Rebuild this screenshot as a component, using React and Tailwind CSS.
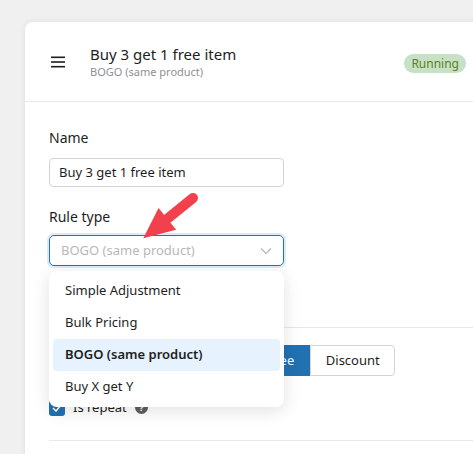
import React from "react";

const font = { fontFamily: '"Noto Sans", "Open Sans", sans-serif' };

function Hamburger() {
  return (
    <svg width="16" height="14" viewBox="0 0 16 14" className="text-[#1e1e1e]">
      <rect x="1" y="1.5" width="14" height="1.6" fill="currentColor" />
      <rect x="1" y="6.2" width="14" height="1.6" fill="currentColor" />
      <rect x="1" y="10.9" width="14" height="1.6" fill="currentColor" />
    </svg>
  );
}

function Chevron() {
  return (
    <svg width="12" height="8" viewBox="0 0 12 8" fill="none">
      <path d="M1 1.5 L6 6.5 L11 1.5" stroke="#b5b5b5" strokeWidth="1.2" />
    </svg>
  );
}

const options = ["Simple Adjustment", "Bulk Pricing", "BOGO (same product)", "Buy X get Y"];

export default function App() {
  return (
    <div className="relative h-[454px] w-[473px] overflow-hidden bg-[#f0f0f0] pl-[25px] pt-[22px]" style={font}>
      <div className="h-[600px] w-[520px] rounded-tl-lg bg-white shadow-[0_0_6px_rgba(0,0,0,0.08)]">
        {/* header */}
        <div className="flex h-[80px] items-center border-b border-[#e8e8e8] pl-[25px] pr-[79px]">
          <Hamburger />
          <div className="ml-[24px] flex flex-col">
            <span className="text-[15px] leading-[20px] text-[#1e1e1e]">Buy 3 get 1 free item</span>
            <span className="mt-[1px] text-[11px] leading-[14px] text-[#8c8f94]">BOGO (same product)</span>
          </div>
          <span className="ml-auto mt-[4px] rounded-full bg-[#c6e1c6] px-[7px] py-[1px] text-[12px] leading-[17px] text-[#5b841b]">
            Running
          </span>
        </div>

        {/* body */}
        <div className="pl-[24px] pt-[27px]">
          <div className="text-[14px] leading-[18px] text-[#1e1e1e]">Name</div>
          <div className="mt-[11px] flex h-[29px] w-[235px] items-center rounded-[4px] border border-[#d4d4d4] px-[9px] text-[13px] text-[#1e1e1e]">
            Buy 3 get 1 free item
          </div>
          <div className="mt-[21px] text-[14px] leading-[18px] text-[#1e1e1e]">Rule type</div>
          <div className="relative mt-[9px] w-[235px]">
            <div className="flex h-[31px] items-center justify-between rounded-[5px] border border-[#2271b1] px-[11px] text-[13px] text-[#b8b8b8] shadow-[0_0_0_2px_#dcebf8]">
              <span>BOGO (same product)</span>
              <Chevron />
            </div>
            {/* dropdown */}
            <div className="absolute left-0 top-[36px] z-10 w-[235px] rounded-lg bg-white p-[4px] shadow-[0_4px_18px_rgba(0,0,0,0.12)]">
              {options.map((o) => (
                <div
                  key={o}
                  className={
                    o === "BOGO (same product)"
                      ? "flex h-[32px] items-center rounded-[4px] bg-[#e6f2fd] px-[12px] text-[13px] font-semibold text-[#1e1e1e]"
                      : "flex h-[32px] items-center px-[12px] text-[13px] text-[#1e1e1e]"
                  }
                >
                  {o}
                </div>
              ))}
            </div>
          </div>

          <div className="mt-[61px] border-t border-[#e8e8e8]" />

          <div className="mt-[17px] flex h-[31px] text-[13px]">
            <div className="flex items-center rounded-l-[4px] border border-[#d4d4d4] px-[14px] text-[#1e1e1e]">Fixed price</div>
            <div className="ml-[107px] flex items-center bg-[#2271b1] px-[16px] text-white">Free</div>
            <div className="flex w-[85px] items-center justify-center rounded-r-[4px] border border-[#d4d4d4] text-[#1e1e1e]">
              Discount
            </div>
          </div>

          <div className="mt-[22px] flex items-center gap-[8px] text-[13px] text-[#1e1e1e]">
            <span className="flex h-[16px] w-[16px] items-center justify-center rounded-[3px] bg-[#2271b1]">
              <svg width="10" height="8" viewBox="0 0 10 8" fill="none">
                <path d="M1 4 L4 7 L9 1" stroke="white" strokeWidth="1.6" />
              </svg>
            </span>
            <span>Is repeat</span>
            <span className="flex h-[13px] w-[13px] items-center justify-center rounded-full bg-[#5f5f5f] text-[9px] font-bold leading-none text-white">
              ?
            </span>
          </div>

          <div className="mt-[22px] border-t border-[#e8e8e8]" />
        </div>
      </div>

      {/* annotation arrow */}
      <svg className="pointer-events-none absolute left-0 top-0 z-20" width="473" height="454">
        <g transform="translate(193 198) rotate(141)" fill="#f2414c">
          <line x1="0" y1="0" x2="40" y2="0" stroke="#f2414c" strokeWidth="10" strokeLinecap="round" />
          <path d="M33 -14 L64 0 L33 14 Z" />
        </g>
      </svg>
    </div>
  );
}
